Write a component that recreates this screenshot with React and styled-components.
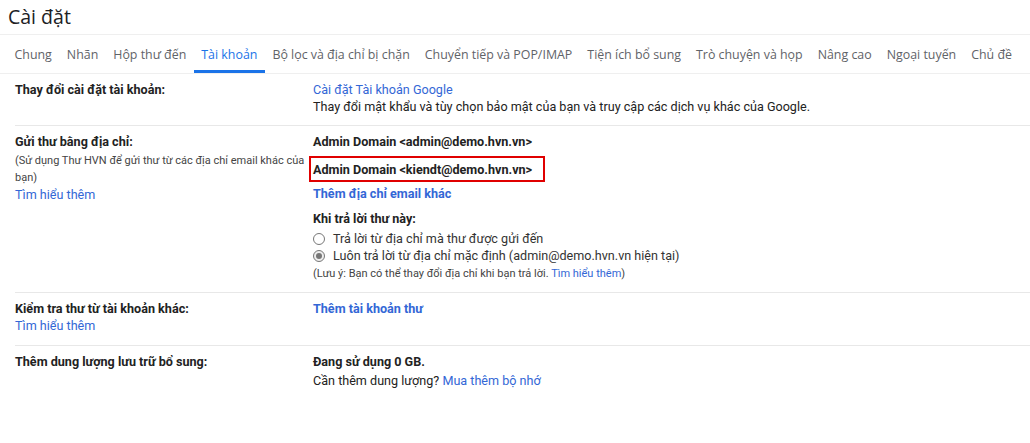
import React from "react";
import styled, { createGlobalStyle } from "styled-components";

const GlobalStyle = createGlobalStyle`
  html, body {
    margin: 0;
    padding: 0;
    background: #fff;
  }
  body {
    font-family: Roboto, "Liberation Sans", Arial, sans-serif;
    font-size: 12.6px;
    color: #222;
  }
`;

const Page = styled.div`
  width: 1030px;
  height: 443px;
  overflow: hidden;
  background: #fff;
`;

const Title = styled.h1`
  margin: 0;
  height: 34px;
  padding-left: 8px;
  font-family: "Open Sans", "Noto Sans", sans-serif;
  font-size: 19.5px;
  font-weight: 400;
  line-height: 33px;
  color: #202124;
  border-bottom: 1px solid #efefef;
`;

const Tabs = styled.nav`
  display: flex;
  height: 38px;
  padding-left: 7px;
  border-bottom: 1px solid #efefef;
  white-space: nowrap;
`;

const Tab = styled.div`
  display: flex;
  align-items: center;
  padding: 3px 7.5px 0;
  font-family: "Open Sans", "Noto Sans", sans-serif;
  font-size: 12.4px;
  color: ${(p) => (p.$active ? "#1a73e8" : "#5f6368")};
  border-bottom: 3px solid ${(p) => (p.$active ? "#1a73e8" : "transparent")};
`;

const Row = styled.section`
  display: grid;
  grid-template-columns: 298px 1fr;
  margin-left: 15px;
  padding: 7px 0 ${(p) => p.$pb || 10}px;
  border-bottom: ${(p) => (p.$last ? "none" : "1px solid #e8e8e8")};
  line-height: 17px;
`;

const Label = styled.div`
  display: flex;
  flex-direction: column;
  align-items: flex-start;
  padding-right: 8px;
`;

const LabelTitle = styled.div`
  font-weight: 700;
  color: #222;
`;

const Hint = styled.div`
  margin-top: 2px;
  font-size: 11px;
  color: #444;
`;

const Content = styled.div`
  display: flex;
  flex-direction: column;
  align-items: flex-start;
`;

const Link = styled.a`
  color: #3367d6;
  text-decoration: none;
  font-weight: ${(p) => (p.$bold ? 700 : 400)};
  cursor: pointer;
`;

const Strong = styled.div`
  font-weight: 700;
  color: #222;
  margin-top: ${(p) => p.$mt || 0}px;
`;

const Highlight = styled.div`
  margin: 6px 0 0 -4px;
  padding: 3px 11px 2px 2px;
  border: 2px solid #e00000;
  font-weight: 700;
`;

const Spaced = styled.div`
  margin-top: ${(p) => p.$mt || 0}px;
`;

const RadioGroup = styled.div`
  display: flex;
  flex-direction: column;
  margin-top: 3px;
`;

const RadioRow = styled.label`
  display: flex;
  align-items: center;
  gap: 6px;
  color: #333;
`;

const Radio = styled.span`
  width: 10px;
  height: 10px;
  border-radius: 50%;
  border: 1px solid #777;
  display: flex;
  align-items: center;
  justify-content: center;
  margin-right: 2px;
  background: ${(p) => (p.$checked ? "#eee" : "#fff")};
  &::after {
    content: "";
    width: 6px;
    height: 6px;
    border-radius: 50%;
    background: ${(p) => (p.$checked ? "#777" : "transparent")};
  }
`;

const Note = styled.div`
  margin-top: 1px;
  font-size: 11px;
  color: #444;
`;

const tabs = [
  "Chung",
  "Nhãn",
  "Hộp thư đến",
  "Tài khoản",
  "Bộ lọc và địa chỉ bị chặn",
  "Chuyển tiếp và POP/IMAP",
  "Tiện ích bổ sung",
  "Trò chuyện và họp",
  "Nâng cao",
  "Ngoại tuyến",
  "Chủ đề",
];

export default function App() {
  return (
    <Page>
      <GlobalStyle />
      <Title>Cài đặt</Title>
      <Tabs>
        {tabs.map((t) => (
          <Tab key={t} $active={t === "Tài khoản"}>
            {t}
          </Tab>
        ))}
      </Tabs>

      <Row>
        <Label>
          <LabelTitle>Thay đổi cài đặt tài khoản:</LabelTitle>
        </Label>
        <Content>
          <Link>Cài đặt Tài khoản Google</Link>
          <div>
            Thay đổi mật khẩu và tùy chọn bảo mật của bạn và truy cập các dịch
            vụ khác của Google.
          </div>
        </Content>
      </Row>

      <Row $pb={10}>
        <Label>
          <LabelTitle>Gửi thư bằng địa chỉ:</LabelTitle>
          <Hint>
            (Sử dụng Thư HVN để gửi thư từ các địa chỉ email khác của bạn)
          </Hint>
          <Link>Tìm hiểu thêm</Link>
        </Label>
        <Content>
          <Strong>Admin Domain &lt;admin@demo.hvn.vn&gt;</Strong>
          <Highlight>Admin Domain &lt;kiendt@demo.hvn.vn&gt;</Highlight>
          <Spaced $mt={3}>
            <Link $bold>Thêm địa chỉ email khác</Link>
          </Spaced>
          <Strong $mt={8}>Khi trả lời thư này:</Strong>
          <RadioGroup>
            <RadioRow>
              <Radio />
              Trả lời từ địa chỉ mà thư được gửi đến
            </RadioRow>
            <RadioRow>
              <Radio $checked />
              Luôn trả lời từ địa chỉ mặc định (admin@demo.hvn.vn hiện tại)
            </RadioRow>
          </RadioGroup>
          <Note>
            (Lưu ý: Bạn có thể thay đổi địa chỉ khi bạn trả lời.{" "}
            <Link>Tìm hiểu thêm</Link>)
          </Note>
        </Content>
      </Row>

      <Row $pb={11}>
        <Label>
          <LabelTitle>Kiểm tra thư từ tài khoản khác:</LabelTitle>
          <Link>Tìm hiểu thêm</Link>
        </Label>
        <Content>
          <Link $bold>Thêm tài khoản thư</Link>
        </Content>
      </Row>

      <Row $last>
        <Label>
          <LabelTitle>Thêm dung lượng lưu trữ bổ sung:</LabelTitle>
        </Label>
        <Content>
          <Strong>Đang sử dụng 0 GB.</Strong>
          <Spaced $mt={2}>
            Cần thêm dung lượng? <Link>Mua thêm bộ nhớ</Link>
          </Spaced>
        </Content>
      </Row>
    </Page>
  );
}
